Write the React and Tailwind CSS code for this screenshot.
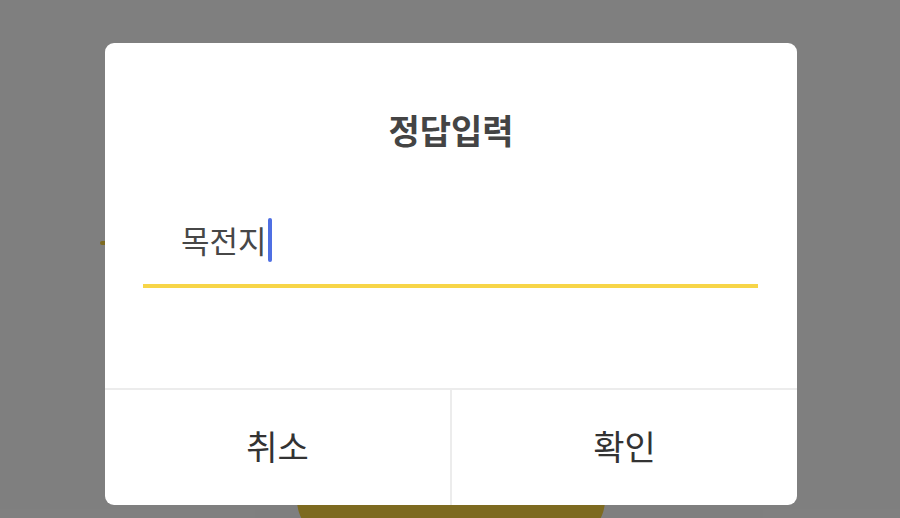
import React from 'react'

const font = {fontFamily: '"Noto Sans CJK KR", "Noto Sans", sans-serif'}

const AnswerDialog = ({title, value, onCancel, onConfirm}) => {
	return (
		<div className="w-[692px] h-[462px] bg-white rounded-[9px] flex flex-col overflow-hidden">
			<h2 className="pt-[67px] text-center text-[34px] leading-[40px] font-bold text-[#444]">
				{title}
			</h2>
			<div className="mt-[68px] mx-[38px] pl-[38px] h-[44px] flex items-center">
				<span className="text-[31px] leading-[44px] text-[#474747]">{value}</span>
				<span className="ml-[1px] w-[4px] h-[44px] rounded-full bg-[#4f6fe3]" />
			</div>
			<div className="mt-[22px] ml-[38px] mr-[39px] h-[4px] bg-[#f7d548]" />
			<div className="flex-1" />
			<div className="h-[117px] flex border-t-2 border-[#ececec]">
				<button
					onClick={onCancel}
					className="flex-1 flex items-center justify-center pb-[4px] text-[34px] text-[#333] border-r-2 border-[#ececec]"
				>
					취소
				</button>
				<button
					onClick={onConfirm}
					className="flex-1 flex items-center justify-center pb-[4px] text-[34px] text-[#333]"
				>
					확인
				</button>
			</div>
		</div>
	)
}

export default function App() {
	return (
		<div className="relative w-[900px] h-[518px] bg-white overflow-hidden" style={font}>
			{/* page behind the modal */}
			<div className="flex flex-col">
				<div className="h-[241px]" />
				<div className="ml-[100px] w-[8px] h-[4px] rounded-full bg-[#fad440]" />
				<div className="h-[215px]" />
				<div className="flex justify-center">
					<div className="ml-[2px] w-[308px] h-[80px] rounded-full bg-[#fad440]" />
				</div>
			</div>
			{/* modal */}
			<div className="absolute inset-0 bg-black/50 flex pl-[105px] pt-[43px]">
				<AnswerDialog title="정답입력" value="목전지" />
			</div>
		</div>
	)
}
